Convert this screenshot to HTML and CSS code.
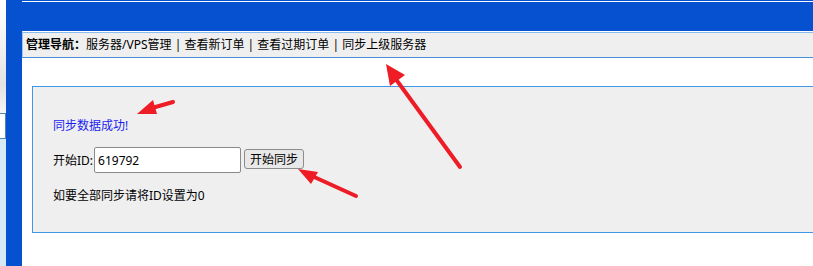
FILE: index.html
```html
<!DOCTYPE html>
<html>
<head>
    <title>同步上级服务器</title>
    <link rel="stylesheet" href="styles.css">
</head>
<body>
    <div class="page">
        <div class="chrome">
            <div class="chrome-edge">
                <div class="edge-top"></div>
                <div class="edge-box"></div>
                <div class="edge-rest"></div>
            </div>
            <div class="chrome-bar"></div>
        </div>
        <div class="main">
            <div class="banner"></div>
            <div class="nav">
                <b>管理导航：</b><a href="#">服务器/VPS管理</a> | <a href="#">查看新订单</a> | <a href="#">查看过期订单</a> | <a href="#">同步上级服务器</a>
            </div>
            <div class="content">
                <div class="panel">
                    <div class="msg">同步数据成功!</div>
                    <form class="sync-row" onsubmit="return false">
                        <label for="start_id">开始ID:</label>
                        <input type="text" id="start_id" class="id-input" value="619792"/>
                        <input type="submit" class="sync-btn" value="开始同步"/>
                    </form>
                    <div class="hint">如要全部同步请将ID设置为0</div>
                </div>
            </div>
        </div>
        <svg class="marks" width="813" height="266" viewBox="0 0 813 266">
            <g stroke="#ee1c25" stroke-width="4" stroke-linecap="round" fill="none">
                <line x1="173" y1="102" x2="152" y2="108"/>
                <line x1="460" y1="167" x2="395" y2="78"/>
                <line x1="356" y1="196" x2="312" y2="176"/>
            </g>
            <g fill="#ee1c25">
                <polygon points="137,114 153,100 157,114"/>
                <polygon points="386,64 405,75 390,86"/>
                <polygon points="298,169 318,172 311,184"/>
            </g>
        </svg>
    </div>
</body>
</html>
```

FILE: styles.css
```css
body{
    margin: 0;
    font-family: "Noto Sans", "Noto Sans CJK SC", sans-serif;
    font-size: 12px;
    color: #000;
}
.page{
    position: relative;
    display: flex;
    width: 813px;
    height: 266px;
    overflow: hidden;
    background-color: #0651d0;
}
.chrome{
    display: flex;
    width: 22px;
}
.chrome-edge{
    display: flex;
    flex-direction: column;
    width: 6px;
}
.edge-top{
    height: 113px;
    background: linear-gradient(#ffffff, #f2f2f2 40%, #e2e2e2 75%, #f6f6f6);
}
.edge-box{
    height: 24px;
    border: 1px solid #4f86ad;
    border-left: none;
    background-color: #fff;
}
.edge-rest{
    flex: 1;
    background-color: #d5eaf6;
}
.chrome-bar{
    flex: 1;
    background-color: #0651d0;
}
.main{
    flex: 1;
    display: flex;
    flex-direction: column;
    background-color: #fff;
}
.banner{
    height: 31px;
    background: linear-gradient(#0651d0 1px, #fff 1px, #fff 2px, #0651d0 2px);
}
.nav{
    height: 25px;
    line-height: 25px;
    padding-left: 3px;
    border-top: 1px solid #fff;
    border-bottom: 1px solid #4a90d9;
    border-left: 1px solid #9cc5ee;
    box-shadow: inset 0 1px #8bbbee;
    background-color: #efefef;
    white-space: nowrap;
}
.nav a{
    color: #000;
    text-decoration: none;
}
.content{
    flex: 1;
    padding: 28px 0 0 10px;
}
.panel{
    height: 145px;
    margin-right: -20px;
    padding: 0 20px;
    border: 1px solid #3e98e6;
    background-color: #efefef;
}
.msg{
    margin-top: 31px;
    line-height: 16px;
    color: #1c1cf2;
}
.sync-row{
    display: flex;
    align-items: center;
    height: 26px;
    margin: 13px 0 0 0;
}
.id-input{
    box-sizing: border-box;
    width: 147px;
    height: 26px;
    margin: 0 0 0 1px;
    padding: 0 3px;
    border: 1px solid #8a8a8a;
    border-radius: 2px;
    font-family: inherit;
    font-size: 12px;
}
.sync-btn{
    box-sizing: border-box;
    width: 60px;
    height: 20px;
    margin: -2px 0 0 3px;
    padding: 0;
    border: 1px solid #8c8c8c;
    border-radius: 3px;
    background-color: #e8e8e8;
    font-family: inherit;
    font-size: 12px;
    color: #000;
}
.hint{
    margin-top: 15px;
    line-height: 16px;
}
.marks{
    position: absolute;
    left: 0;
    top: 0;
    pointer-events: none;
}
```
